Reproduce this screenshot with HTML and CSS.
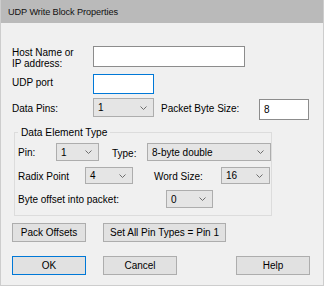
FILE: index.html
```html
<!DOCTYPE html>
<html lang="en">

<head>
  <title>UDP Write Block Properties</title>
  <meta charset="UTF-8">
  <link rel="stylesheet" href="styles.css">
</head>

<body>
  <div class="dialog">
    <div class="titlebar">UDP Write Block Properties</div>

    <div class="content">
      <div class="row row-host">
        <label class="lbl lbl-host">Host Name or<br>IP address:</label>
        <div class="textbox tb-host"></div>
      </div>

      <div class="row row-port">
        <label class="lbl lbl-port">UDP port</label>
        <div class="textbox tb-port focused"></div>
      </div>

      <div class="row row-pins">
        <label class="lbl lbl-pins">Data Pins:</label>
        <div class="combo cb-pins"><span>1</span><svg class="chev" width="7" height="4" viewBox="0 0 7 4"><path d="M0.5 0.5 L3.5 3.5 L6.5 0.5" /></svg></div>
        <label class="lbl lbl-size">Packet Byte Size:</label>
        <div class="textbox tb-size"><span>8</span></div>
      </div>

      <fieldset class="group">
        <legend>Data Element Type</legend>

        <div class="row row-pin">
          <label class="lbl lbl-pin">Pin:</label>
          <div class="combo cb-pin"><span>1</span><svg class="chev" width="7" height="4" viewBox="0 0 7 4"><path d="M0.5 0.5 L3.5 3.5 L6.5 0.5" /></svg></div>
          <label class="lbl lbl-type">Type:</label>
          <div class="combo cb-type"><span>8-byte double</span><svg class="chev" width="7" height="4" viewBox="0 0 7 4"><path d="M0.5 0.5 L3.5 3.5 L6.5 0.5" /></svg></div>
        </div>

        <div class="row row-radix">
          <label class="lbl lbl-radix">Radix Point</label>
          <div class="combo cb-radix"><span>4</span><svg class="chev" width="7" height="4" viewBox="0 0 7 4"><path d="M0.5 0.5 L3.5 3.5 L6.5 0.5" /></svg></div>
          <label class="lbl lbl-word">Word Size:</label>
          <div class="combo cb-word"><span>16</span><svg class="chev" width="7" height="4" viewBox="0 0 7 4"><path d="M0.5 0.5 L3.5 3.5 L6.5 0.5" /></svg></div>
        </div>

        <div class="row row-offset">
          <label class="lbl lbl-offset">Byte offset into packet:</label>
          <div class="combo cb-offset"><span>0</span><svg class="chev" width="7" height="4" viewBox="0 0 7 4"><path d="M0.5 0.5 L3.5 3.5 L6.5 0.5" /></svg></div>
        </div>
      </fieldset>

      <div class="row row-tools">
        <button class="btn btn-pack">Pack Offsets</button>
        <button class="btn btn-setall">Set All Pin Types = Pin 1</button>
      </div>

      <div class="row row-actions">
        <button class="btn btn-ok">OK</button>
        <button class="btn btn-cancel">Cancel</button>
        <button class="btn btn-help">Help</button>
      </div>
    </div>
  </div>
</body>

</html>
```

FILE: styles.css
```css
:root {
  --face: #f0f0f0;
  --title-bg: #bababa;
  --field-border: #8c8c8c;
  --focus-blue: #0078d7;
  --combo-bg: #e5e5e5;
  --combo-border: #adadad;
  --btn-bg: #e1e1e1;
  --group-border: #dcdcdc;
}

* {
  box-sizing: border-box;
  margin: 0;
  padding: 0;
}

html,
body {
  width: 324px;
  height: 286px;
  overflow: hidden;
}

body {
  background-color: var(--face);
  font-family: 'Liberation Sans', Arial, sans-serif;
  font-size: 10px;
  line-height: 11px;
  color: #000;
}

.dialog {
  width: 324px;
  height: 286px;
  border-left: 1px solid #cdcdcd;
  border-right: 1px solid #cdcdcd;
  border-bottom: 1px solid #cdcdcd;
}

.titlebar {
  height: 23px;
  background-color: var(--title-bg);
  padding-left: 7px;
  padding-top: 7px;
  font-size: 9.2px;
  line-height: 11px;
  letter-spacing: -0.1px;
  color: #111;
}

.content {
  padding-left: 11px;
}

.row {
  display: flex;
  align-items: flex-start;
}

.lbl {
  display: block;
  flex: none;
}

/* text boxes */
.textbox {
  flex: none;
  background-color: #fff;
  border: 1px solid var(--field-border);
  padding-left: 4px;
}

.textbox.focused {
  border-color: var(--focus-blue);
}

.textbox span {
  display: block;
  margin-top: 4px;
}

/* combo boxes */
.combo {
  flex: none;
  display: flex;
  align-items: center;
  justify-content: space-between;
  background-color: var(--combo-bg);
  border: 1px solid var(--combo-border);
  padding-left: 4px;
  padding-right: 6px;
}

.chev {
  fill: none;
  stroke: #6d6d6d;
  stroke-width: 1;
}

/* host row */
.row-host {
  margin-top: 23px;
}

.lbl-host {
  width: 81px;
  margin-top: 1px;
}

.tb-host {
  width: 152px;
  height: 21px;
}

/* udp port */
.row-port {
  margin-top: 5px;
}

.lbl-port {
  width: 81px;
  margin-top: 3px;
}

.tb-port {
  width: 61px;
  height: 20px;
}

/* data pins */
.row-pins {
  margin-top: 4px;
}

.lbl-pins {
  width: 81px;
  margin-top: 5px;
}

.cb-pins {
  width: 61px;
  height: 19px;
}

.lbl-size {
  width: 98px;
  margin-left: 7px;
  margin-top: 5px;
}

.tb-size {
  width: 50px;
  height: 21px;
  margin-top: 1px;
}

/* group box */
.group {
  margin-top: 7px;
  margin-left: 2px;
  width: 258px;
  border: 1px solid var(--group-border);
  padding: 5px 0 7px 3px;
}

.group legend {
  padding: 0 3px;
  font-size: 10.2px;
}

.lbl-pin {
  width: 38px;
  margin-top: 4px;
}

.cb-pin {
  width: 43px;
  height: 18px;
}

.lbl-type {
  width: 35px;
  margin-left: 13px;
  margin-top: 5px;
}

.cb-type {
  width: 124px;
  height: 18px;
}

.row-radix {
  margin-top: 6px;
}

.lbl-radix {
  width: 67px;
  margin-top: 4px;
}

.cb-radix {
  width: 48px;
  height: 17px;
}

.lbl-word {
  width: 67px;
  margin-left: 21px;
  margin-top: 4px;
}

.cb-word {
  width: 49px;
  height: 17px;
}

.row-offset {
  margin-top: 6px;
}

.lbl-offset {
  width: 148px;
  margin-top: 4px;
}

.cb-offset {
  width: 47px;
  height: 18px;
}

/* buttons */
.btn {
  flex: none;
  height: 19px;
  background-color: var(--btn-bg);
  border: 1px solid var(--combo-border);
  font-family: inherit;
  font-size: 10px;
  line-height: 11px;
  color: #000;
  text-align: center;
}

.row-tools {
  margin-top: 7px;
}

.btn-pack {
  width: 74px;
}

.btn-setall {
  width: 123px;
  margin-left: 17px;
}

.row-actions {
  margin-top: 14px;
}

.btn-ok {
  width: 74px;
  border-color: var(--focus-blue);
}

.btn-cancel {
  width: 74px;
  margin-left: 17px;
}

.btn-help {
  width: 74px;
  margin-left: 59px;
}
```
